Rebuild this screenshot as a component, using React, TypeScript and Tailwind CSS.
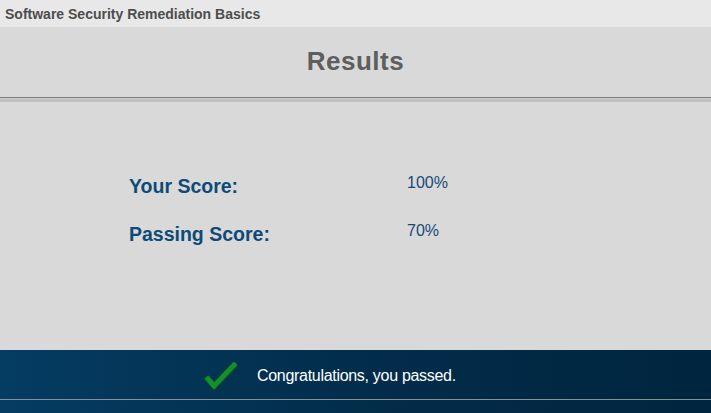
export default function App() {
  return (
    <div className="w-[711px] h-[413px] flex flex-col bg-[#d9d9d9] font-['Liberation_Sans',Arial,sans-serif] overflow-hidden">
      {/* title bar */}
      <div className="h-[27px] bg-[#e8e8e8] flex items-center px-[5px]">
        <span className="text-[14px] font-bold text-[#4d4d4d] leading-none pt-[1px]">
          Software Security Remediation Basics
        </span>
      </div>

      {/* header */}
      <div className="h-[70px] flex items-center justify-center">
        <h1 className="text-[26px] font-bold tracking-[0.5px] text-[#5e5e5e] leading-none pb-[2px]">Results</h1>
      </div>
      <div className="h-px bg-[#7b7b7b]" />
      <div className="h-px bg-[#cfcfcf]" />
      <div className="h-[3px] bg-[#c0c0c0]" />

      {/* scores */}
      <div className="flex-1 pt-[72px] pl-[129px]">
        <div className="grid grid-cols-[278px_auto] gap-y-[24px]">
          <div className="text-[19.5px] font-bold text-[#0e4a78] leading-[24px]">Your Score:</div>
          <div className="text-[16px] text-[#164a76] leading-[18px]">100%</div>
          <div className="text-[19.5px] font-bold text-[#0e4a78] leading-[24px]">Passing Score:</div>
          <div className="text-[16px] text-[#164a76] leading-[18px]">70%</div>
        </div>
      </div>

      {/* footer */}
      <div className="h-[63px] flex flex-col bg-gradient-to-r from-[#053c62] via-[#022d4b] to-[#00253e]">
        <div className="h-[49px] flex items-center pl-[204px] gap-[20px]">
          <svg width="33" height="28" viewBox="0 0 33 28" className="mt-[2px]">
            <path d="M4 17 L10 24 L30 3" fill="none" stroke="#0b4a12" strokeWidth="5.5" strokeLinecap="square" transform="translate(0.8 0.8)" />
            <path d="M4 17 L10 24 L30 3" fill="none" stroke="#14902a" strokeWidth="5" strokeLinecap="square" />
          </svg>
          <span className="text-[16px] tracking-[-0.3px] text-white leading-none pt-[2px]">Congratulations, you passed.</span>
        </div>
        <div className="h-px bg-[#8a8f94]" />
        <div className="flex-1" />
      </div>
    </div>
  );
}
